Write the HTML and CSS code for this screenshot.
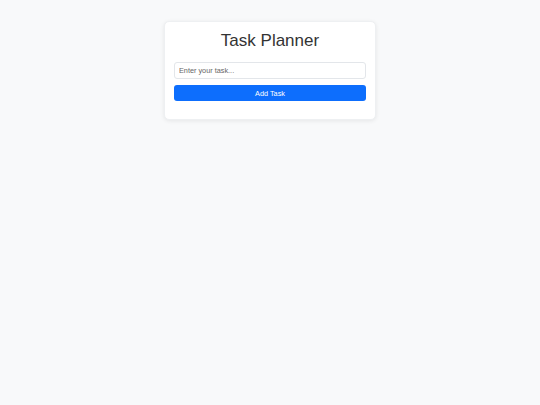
FILE: index.html
```html
<!DOCTYPE html>
<html lang="en">

<head>
    <meta charset="UTF-8">
    <meta name="viewport" content="width=device-width, initial-scale=1.0">
    <title>Task Planner</title>
    <link rel="stylesheet" href="styles.css">
</head>

<body>

    <div class="container">
        <h1>Task Planner</h1>

        <form id="task-form">
            <!-- Task Input -->
            <input type="text" id="task" name="task" placeholder="Enter your task...">

            <!-- Add Button -->
            <button type="submit">Add Task</button>
        </form>

        <ul id="task-list"></ul>
    </div>

</body>

</html>
```

FILE: styles.css
```css
/* General Styles */
* {
    margin: 0;
    padding: 0;
    box-sizing: border-box;
}

body {
    font-family: 'Liberation Sans', Arial, sans-serif;
    background-color: #f8f9fa;
    display: flex;
    justify-content: center;
    align-items: flex-start;
    padding-top: 21px;
    height: 100vh;
    margin: 0;
}

.container {
    background-color: #fff;
    width: 212px;
    padding: 8px 9px 18px;
    border-radius: 5px;
    border: 1px solid #eef0f2;
    box-shadow: 0 1px 4px rgba(0, 0, 0, 0.08);
}

h1 {
    text-align: center;
    color: #333;
    font-size: 17px;
    font-weight: normal;
    line-height: 22px;
    margin-bottom: 10px;
}

form {
    display: flex;
    flex-direction: column;
    gap: 6px;
}

input[type="text"] {
    width: 100%;
    height: 17px;
    padding: 0 4px;
    border-radius: 3px;
    border: 1px solid #e3e6ea;
    font-family: inherit;
    font-size: 7.3px;
    color: #333;
}

input[type="text"]::placeholder {
    color: #666;
}

button {
    height: 16px;
    background-color: #0d6efd;
    color: #fff;
    border: none;
    border-radius: 3px;
    font-family: inherit;
    font-size: 7.3px;
    cursor: pointer;
}

#task-list {
    list-style: none;
}
```
